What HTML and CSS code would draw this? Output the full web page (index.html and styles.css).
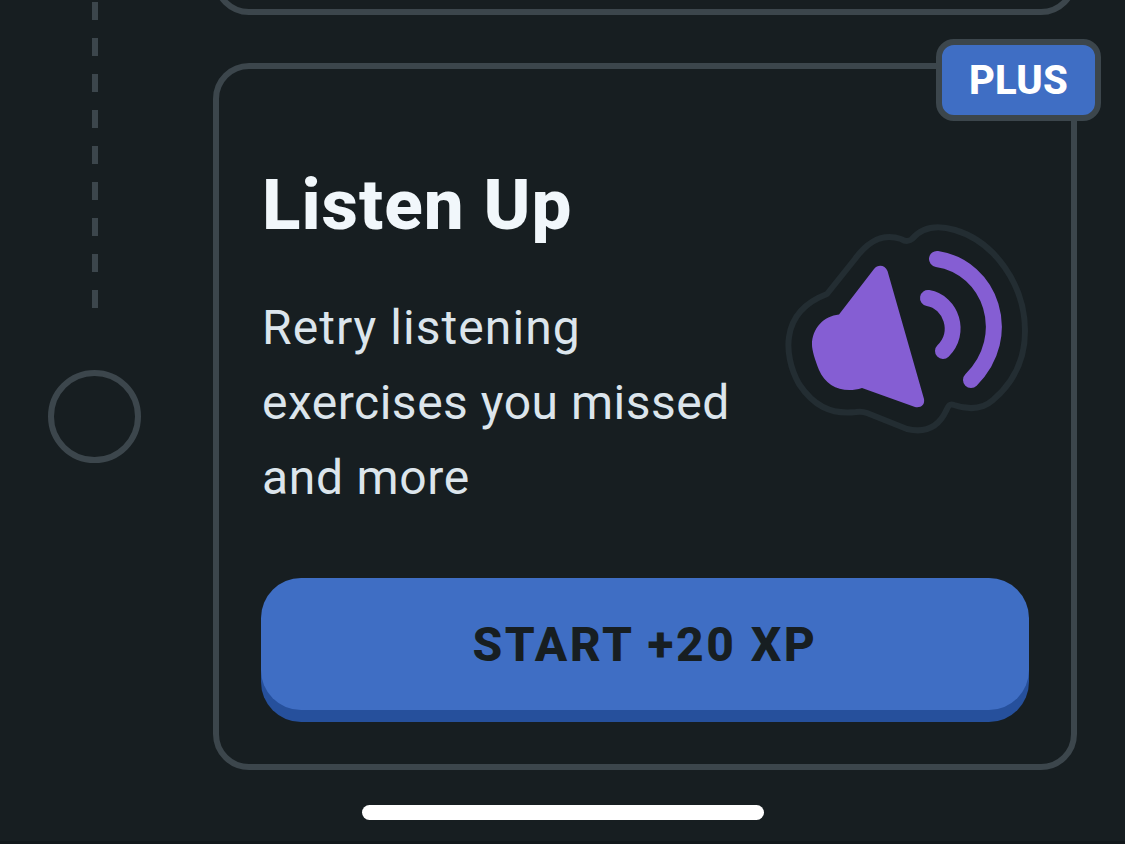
FILE: index.html
```html
<!DOCTYPE html>
<html lang="en">
<head>
<meta charset="utf-8">
<title>Listen Up</title>
<link rel="stylesheet" href="styles.css">
</head>
<body>
<main class="screen">
  <div class="path">
    <div class="path-line"></div>
    <div class="path-node"></div>
  </div>
  <div class="cards">
    <section class="card card-previous"></section>
    <section class="card card-listen">
      <span class="badge">PLUS</span>
      <div class="content">
        <div class="copy">
          <h1 class="title">Listen Up</h1>
          <p class="description"><span class="line line-1">Retry listening</span> <span class="line line-2">exercises you missed</span> <span class="line line-3">and more</span></p>
        </div>
        <svg class="speaker" viewBox="770 210 270 240" width="270" height="240" fill="none" stroke-linecap="round" stroke-linejoin="round">
          <path class="outline" d="M827 294 L855 259 C871 237 886 234 901 239 Q907 243 912 239 C923 226 938 225 955 230 C995 242 1025 285 1025 331 C1025 360 1013 383 993 400 C983 409 969 410 954 405 C949 403 948 407 946 411 C938 428 924 433 907 429 L867 413 Q862 411 856 412 C830 415 813 405 799 384 C790 368 787 350 789 337 C792 315 806 302 827 294 Z"/>
          <path class="cone" d="M839 314.500 L874 269 C878 264 885 265 887.500 271 L924 399 C925 405 921 408 915 407 L862 388 C844 394 826 387 819 370 C815 360 812 350 812 345 C812 328 824 316 839 314.500 Z"/>
          <path class="wave" d="M928 298 C951.500 302 961.500 333 943 351"/>
          <path class="wave" d="M937 259 C991 267 1015 336 971 380"/>
        </svg>
      </div>
      <button class="start">START +20 XP</button>
    </section>
    <div class="home-indicator"></div>
  </div>
</main>
</body>
</html>
```
FILE: styles.css
```css
* { box-sizing: border-box; }

body {
  margin: 0;
  background: #171e21;
  font-family: Roboto, "Liberation Sans", sans-serif;
}

.screen {
  display: flex;
  width: 1125px;
  height: 844px;
  overflow: hidden;
  border-bottom: 3px solid #12181b;
}

.path {
  width: 213px;
  padding-left: 48px;
}

.path-line {
  width: 6px;
  height: 306px;
  margin: 2px 0 62px 44px;
  background: repeating-linear-gradient(#3c464c 0 18px, transparent 18px 36px);
}

.path-node {
  width: 93px;
  height: 93px;
  border: 6px solid #3c464c;
  border-radius: 50%;
}

.cards {
  display: flex;
  flex-direction: column;
  width: 864px;
}

.card {
  flex: none;
  border: 6px solid #3c464c;
  border-radius: 36px;
}

.card-previous {
  height: 100px;
  margin-top: -85px;
  margin-bottom: 48px;
}

.card-listen {
  position: relative;
  height: 707px;
  padding: 105px 42px 0;
}

.badge {
  position: absolute;
  top: -30px;
  right: -30px;
  width: 165px;
  height: 82px;
  border: 6px solid #3c464c;
  border-radius: 18px;
  background: #3f6ec4;
  color: #fff;
  font-size: 40px;
  font-weight: 800;
  line-height: 72px;
  letter-spacing: 0.2px;
  text-align: center;
}

.content {
  display: flex;
  height: 404px;
}

.copy {
  flex: none;
  width: 509px;
}

.title {
  margin: 0;
  padding: 1px 0 0 1px;
  color: #f1f7fb;
  font-size: 71px;
  font-weight: 800;
  line-height: 60px;
  letter-spacing: 1px;
}

.description {
  margin: 55px 0 0;
  padding-left: 1px;
  color: #dce5ec;
  font-size: 48px;
  line-height: 75px;
}

.line {
  display: block;
  white-space: nowrap;
}

.line-1 { letter-spacing: 1.05px; }
.line-2 { letter-spacing: 0.5px; }
.line-3 { letter-spacing: 0.7px; }

.speaker {
  flex: none;
  margin-top: 36px;
}

.outline { stroke: #232d32; stroke-width: 6px; }
.cone { fill: #855ed3; }
.wave { stroke: #855ed3; stroke-width: 16px; }

.start {
  display: block;
  width: 768px;
  height: 132px;
  padding: 0;
  border: 0;
  border-radius: 40px;
  background: #3f6ec4;
  box-shadow: 0 12px 0 #26509c;
  color: #171e21;
  font-family: inherit;
  font-size: 48px;
  font-weight: 800;
  letter-spacing: 2.5px;
}

.home-indicator {
  width: 402px;
  height: 15px;
  margin: 35px 0 0 149px;
  border-radius: 8px;
  background: #fff;
}
```
